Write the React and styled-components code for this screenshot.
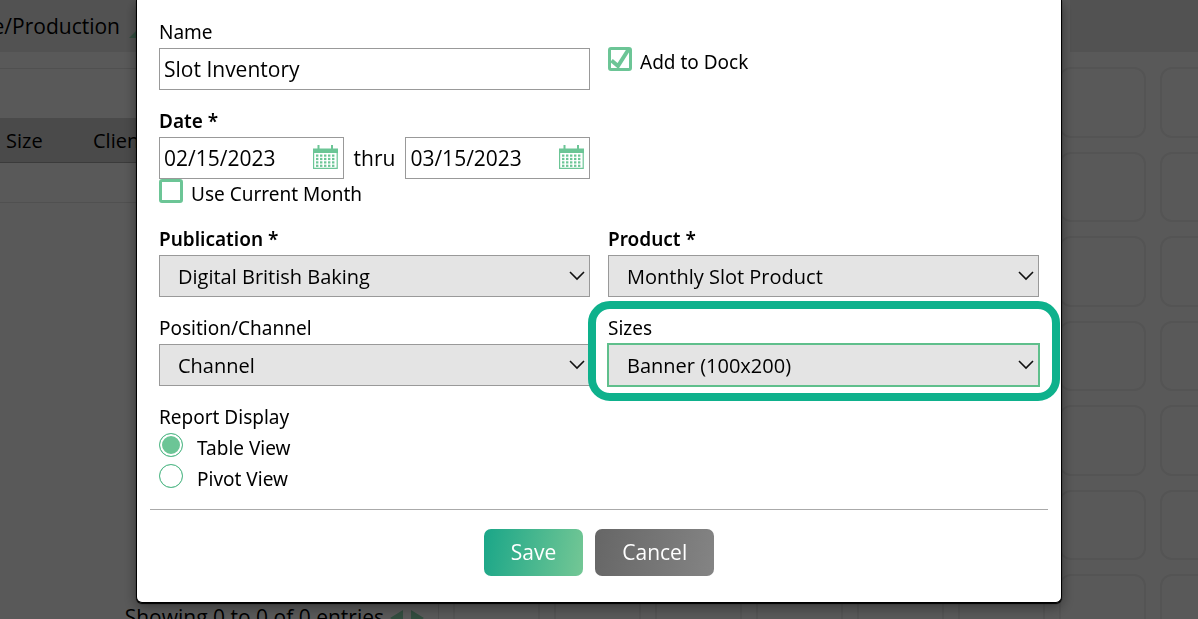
import React, { useState } from "react";
import styled, { createGlobalStyle } from "styled-components";

const green = "#6cc596";
const sans = '"Open Sans", "Noto Sans", sans-serif';
const labelFont = '"Noto Sans", "Open Sans", sans-serif';

const GlobalStyle = createGlobalStyle`
  *, *::before, *::after { box-sizing: border-box; }
  html, body, #root { height: 100%; }
  body { margin: 0; overflow: hidden; font: 20px/27px ${sans}; color: #000; background: #fff; }
  input, select, button { font: inherit; color: inherit; margin: 0; }
`;

/* ---------- page behind the dialog ---------- */

const Page = styled.div`
  display: flex;
  height: 100%;
  overflow: hidden;
`;

const ListPane = styled.section`
  flex: 0 0 438px;
  display: flex;
  flex-direction: column;
`;

const PaneTitle = styled.header`
  display: flex;
  align-items: center;
  gap: 8px;
  height: 52px;
  background: #ececec;
  white-space: nowrap;
  font-size: 21px;
  svg { margin-top: 16px; }
`;

const TitleText = styled.span`
  display: flex;
  justify-content: flex-end;
  width: 120px;
`;

const FilterStrip = styled.div`
  height: 66px;
  padding-top: 16px;
  &::before {
    content: "";
    display: block;
    border-top: 1px solid #e4e4e4;
  }
`;

const ListTable = styled.table`
  width: 100%;
  border-collapse: collapse;
  th {
    height: 44px;
    padding: 2px 6px 0;
    text-align: left;
    font-weight: 400;
    background: #d4d4d4;
    border-bottom: 1px solid #a8a8a8;
  }
  td {
    height: 40px;
    padding: 0;
    border-bottom: 1px solid #e4e4e4;
  }
`;

const ListFooter = styled.footer`
  margin: auto 0 -12px;
  padding-right: 14px;
  display: flex;
  justify-content: flex-end;
  align-items: center;
  gap: 6px;
  font-size: 21px;
  white-space: nowrap;
`;

const DockPane = styled.section`
  flex: 1;
  min-width: 0;
  border-left: 1px solid #e4e4e4;
`;

const DockBar = styled.div`
  display: flex;
  gap: 12px;
  height: 52px;
`;

const DockBarPart = styled.div`
  flex: ${(p) => (p.$end ? "0 0 128px" : "1")};
  background: #ececec;
`;

const DockGrid = styled.div`
  display: grid;
  grid-template-columns: repeat(8, 87px);
  grid-auto-rows: 1fr;
  gap: 14px;
  height: 578px;
  margin: 15px 0 0 14px;
`;

const DockTile = styled.div`
  border: 2px solid #efefef;
  border-radius: 12px;
`;

/* ---------- dialog ---------- */

const Overlay = styled.div`
  position: fixed;
  inset: 0;
  padding: 0 136px;
  background: rgba(0, 0, 0, 0.65);
`;

const Dialog = styled.form`
  padding: 21px 13px 26px;
  background: #fff;
  border: 1px solid #000;
  border-top: 0;
  border-radius: 0 0 6px 6px;
  box-shadow: 0 1px 1px #000, 0 4px 14px rgba(0, 0, 0, 0.4);
`;

const Fields = styled.div`
  display: grid;
  grid-template-columns: 1fr 1fr;
  column-gap: 18px;
  row-gap: 20px;
  padding: 0 9px 14px;
`;

const Field = styled.div`
  min-width: 0;
`;

const HighlightedField = styled(Field)`
  position: relative;
  &::after {
    content: "";
    position: absolute;
    inset: -16px -21px -15px -20px;
    border: 8px solid #0eb18c;
    border-radius: 22px;
    pointer-events: none;
  }
`;

const Label = styled.label`
  display: block;
  height: 27px;
  line-height: 22px;
  font-family: ${labelFont};
  font-size: 19px;
  font-weight: ${(p) => (p.$required ? 600 : 400)};
`;

const TextInput = styled.input`
  display: block;
  width: 100%;
  height: 42px;
  padding: 0 4px;
  border: 1px solid #999;
  background: #fff;
  outline: 0;
  font-size: 21px;
`;

const DateRange = styled.div`
  display: grid;
  grid-template-columns: minmax(0, 1fr) auto minmax(0, 1fr);
  align-items: center;
`;

const Thru = styled.span`
  padding: 0 10px;
  font-size: 21px;
`;

const DateBox = styled.div`
  display: flex;
  align-items: center;
  height: 42px;
  padding: 0 4px;
  border: 1px solid #999;
  input {
    flex: 1;
    min-width: 0;
    padding: 0;
    border: 0;
    outline: 0;
    font-size: 21px;
  }
  button {
    display: flex;
    padding: 0 1px 2px 0;
    border: 0;
    background: none;
  }
`;

const SelectBox = styled.div`
  position: relative;
  select {
    display: block;
    appearance: none;
    width: 100%;
    height: 42px;
    padding: 0 40px 0 18px;
    border: 1px solid ${(p) => (p.$active ? "#5fbf8c" : "#999")};
    border-radius: 0;
    box-shadow: ${(p) => (p.$active ? "0 0 0 1px #5fbf8c" : "none")};
    background: #e4e4e4;
    outline: 0;
  }
  svg {
    position: absolute;
    right: 5px;
    top: 15px;
    pointer-events: none;
  }
`;

const CheckLabel = styled.label`
  display: flex;
  align-items: flex-start;
  gap: 8px;
  height: 29px;
  font-family: ${labelFont};
  font-size: 19px;
  line-height: 31px;
  margin-top: ${(p) => (p.$beside ? "26px" : "0")};
`;

const CheckBox = styled.input.attrs({ type: "checkbox" })`
  appearance: none;
  flex: none;
  width: 24px;
  height: 24px;
  border: 3px solid ${green};
  border-radius: 3px;
  background: #fff;
`;

const CheckWrap = styled.span`
  display: flex;
  position: relative;
  svg {
    position: absolute;
    inset: 0;
    pointer-events: none;
  }
`;

const RadioGroup = styled.fieldset`
  min-width: 0;
  margin: 0;
  padding: 0;
  border: 0;
  legend {
    padding: 0;
    height: 27px;
    line-height: 22px;
    font-family: ${labelFont};
    font-size: 19px;
  }
`;

const RadioLabel = styled.label`
  display: flex;
  align-items: flex-start;
  gap: 14px;
  height: 31px;
  font-family: ${labelFont};
  font-size: 19px;
  line-height: 31px;
`;

const Radio = styled.input.attrs({ type: "radio" })`
  appearance: none;
  width: 24px;
  height: 24px;
  border: 1px solid #55b98a;
  border-radius: 50%;
  background: ${green};
  box-shadow: inset 0 0 0 ${(p) => (p.checked ? "2px" : "12px")} #fff;
`;

const Actions = styled.div`
  display: flex;
  justify-content: center;
  gap: 12px;
  padding-top: 19px;
  border-top: 1px solid #aaa;
`;

const ActionButton = styled.button`
  height: 47px;
  padding: 0 27px;
  border: 0;
  border-radius: 7px;
  font-size: 21px;
  font-weight: 500;
  color: #fff;
  background: ${(p) =>
    p.$primary
      ? "linear-gradient(100deg, #1aa688, #74c795)"
      : "linear-gradient(100deg, #666, #848484)"};
`;

function Chevron() {
  return (
    <svg width="16" height="12" viewBox="0 0 16 12" fill="none" stroke="#111" strokeWidth="1.6" aria-hidden="true">
      <path d="M1 2 8 9l7-7" />
    </svg>
  );
}

function CalendarIcon() {
  const dots = [];
  for (let r = 0; r < 4; r++)
    for (let c = 0; c < 5; c++)
      dots.push(<rect key={`${r}-${c}`} x={3 + c * 4} y={9.5 + r * 3.4} width="2.400" height="2.200" />);
  return (
    <svg width="25" height="24" viewBox="0 0 25 24" fill={green} aria-hidden="true">
      <path d="M0 3.500h25V8H0zM4.500 0h2v4h-2zM18 0h2v4h-2z" />
      <path d="M.6 7v16.300h23.600V7" fill="none" stroke={green} strokeWidth="1.200" />
      {dots}
    </svg>
  );
}

function Triangle({ d }) {
  return (
    <svg width="14" height="16" viewBox="0 0 14 16" fill="#8fdcb4" aria-hidden="true">
      <path d={d} />
    </svg>
  );
}

function SelectField({ id, label, required, active, value }) {
  const Wrap = active ? HighlightedField : Field;
  return (
    <Wrap>
      <Label htmlFor={id} $required={required}>{label}</Label>
      <SelectBox $active={active}>
        <select id={id} defaultValue={value}>
          <option>{value}</option>
        </select>
        <Chevron />
      </SelectBox>
    </Wrap>
  );
}

function DateInput({ label, value, id }) {
  return (
    <DateBox>
      <input id={id} type="text" aria-label={label} defaultValue={value} />
      <button type="button" aria-label={`${label} calendar`}>
        <CalendarIcon />
      </button>
    </DateBox>
  );
}

export default function App() {
  const [dock, setDock] = useState(true);
  const [current, setCurrent] = useState(false);
  const [view, setView] = useState("table");

  return (
    <>
      <GlobalStyle />
      <Page>
        <ListPane>
          <PaneTitle>
            <TitleText>e/Production</TitleText>
            <Triangle d="M1 12 11 2v10z" />
          </PaneTitle>
          <FilterStrip />
          <ListTable>
            <colgroup>
              <col width="87" />
              <col />
            </colgroup>
            <thead>
              <tr><th>Size</th><th>Client</th></tr>
            </thead>
            <tbody>
              <tr><td /><td /></tr>
            </tbody>
          </ListTable>
          <ListFooter>
            <span>Showing 0 to 0 of 0 entries</span>
            <Triangle d="M13 0v16L0 8z" />
            <Triangle d="M1 0v16l13-8z" />
          </ListFooter>
        </ListPane>
        <DockPane>
          <DockBar>
            <DockBarPart />
            <DockBarPart $end />
          </DockBar>
          <DockGrid>
            {Array.from({ length: 56 }, (_, i) => <DockTile key={i} />)}
          </DockGrid>
        </DockPane>
      </Page>

      <Overlay>
        <Dialog role="dialog" aria-modal="true" onSubmit={(e) => e.preventDefault()}>
          <Fields>
            <Field>
              <Label htmlFor="name">Name</Label>
              <TextInput id="name" type="text" defaultValue="Slot Inventory" />
            </Field>
            <Field>
              <CheckLabel $beside>
                <CheckWrap>
                  <CheckBox checked={dock} onChange={() => setDock(!dock)} />
                  {dock && (
                    <svg width="24" height="24" viewBox="0 0 24 24" fill="none" stroke={green} strokeWidth="4" aria-hidden="true">
                      <path d="M3.500 13.500 10 19 20.500 2.500" />
                    </svg>
                  )}
                </CheckWrap>
                Add to Dock
              </CheckLabel>
            </Field>

            <Field>
              <Label htmlFor="from" $required>Date *</Label>
              <DateRange>
                <DateInput id="from" label="Start date" value="02/15/2023" />
                <Thru>thru</Thru>
                <DateInput id="to" label="End date" value="03/15/2023" />
              </DateRange>
              <CheckLabel>
                <CheckBox checked={current} onChange={() => setCurrent(!current)} />
                Use Current Month
              </CheckLabel>
            </Field>
            <Field />

            <SelectField id="publication" label="Publication *" required value="Digital British Baking" />
            <SelectField id="product" label="Product *" required value="Monthly Slot Product" />
            <SelectField id="position" label="Position/Channel" value="Channel" />
            <SelectField id="sizes" label="Sizes" active value="Banner (100x200)" />

            <RadioGroup>
              <legend>Report Display</legend>
              <RadioLabel>
                <Radio name="view" checked={view === "table"} onChange={() => setView("table")} />
                Table View
              </RadioLabel>
              <RadioLabel>
                <Radio name="view" checked={view === "pivot"} onChange={() => setView("pivot")} />
                Pivot View
              </RadioLabel>
            </RadioGroup>
          </Fields>
          <Actions>
            <ActionButton type="submit" $primary>Save</ActionButton>
            <ActionButton type="button">Cancel</ActionButton>
          </Actions>
        </Dialog>
      </Overlay>
    </>
  );
}
